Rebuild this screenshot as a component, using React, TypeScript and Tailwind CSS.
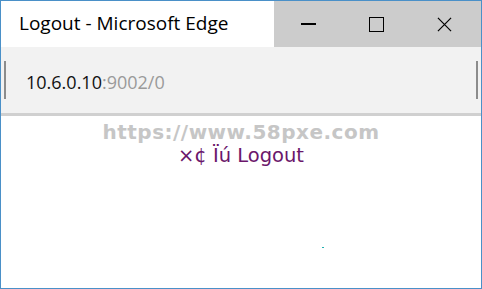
export default function App() {
  return (
    <div className="w-[482px] h-[289px] border border-[#4a90c8] bg-white flex flex-col overflow-hidden">
      {/* title bar */}
      <div className="h-[46px] flex shrink-0">
        <div className="w-[273px] bg-white flex items-center pl-[18px] pb-[1px]">
          <span className="text-[19px] text-black font-['Open_Sans',sans-serif]">Logout - Microsoft Edge</span>
        </div>
        <div className="flex-1 bg-[#cccccc] flex items-center">
          <div className="w-[68px] flex justify-center">
            <div className="w-[15px] h-[1.5px] bg-black" />
          </div>
          <div className="w-[68px] flex justify-center">
            <div className="w-[15px] h-[15px] border-[1.5px] border-black" />
          </div>
          <div className="w-[68px] flex justify-center">
            <svg width="15" height="15" viewBox="0 0 16 16">
              <path d="M1 1 L15 15 M15 1 L1 15" stroke="black" strokeWidth="1.3" fill="none" />
            </svg>
          </div>
        </div>
      </div>
      {/* address bar */}
      <div className="h-[66px] bg-[#f2f2f2] flex items-center justify-between px-[3px] shrink-0">
        <div className="flex items-center gap-[20px]">
          <div className="w-[2px] h-[38px] bg-[#8c8c8c]" />
          <span className="text-[18px] pt-[5px] font-['Open_Sans',sans-serif] text-[#111]">
            10.6.0.10<span className="text-[#9a9a9a]">:9002/0</span>
          </span>
        </div>
        <div className="w-[2px] h-[38px] bg-[#8c8c8c]" />
      </div>
      <div className="h-[3px] bg-[#d0d0d0] shrink-0" />
      {/* content */}
      <div className="flex-1 flex flex-col items-center pt-[4px] relative">
        <span className="text-[20px] leading-[24px] font-bold text-[#c6c6c6] font-['DejaVu_Sans',sans-serif] tracking-[0.5px]">
          https://www.58pxe.com
        </span>
        <span className="text-[19.5px] leading-[22px] pt-[1px] text-[#6b166b] font-['DejaVu_Sans',sans-serif]">
          ×¢ Ïú Logout
        </span>
        <div className="absolute left-[321px] top-[131px] w-[2px] h-[1px] bg-[#20b0b0]" />
      </div>
    </div>
  );
}
